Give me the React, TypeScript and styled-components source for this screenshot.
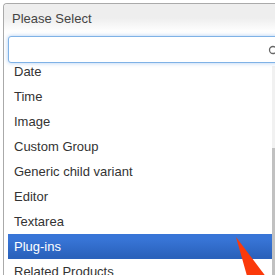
import * as React from 'react';
import styled, { createGlobalStyle } from 'styled-components';

const GlobalStyle = createGlobalStyle`
  html, body {
    margin: 0;
    padding: 0;
    background: #ffffff;
    overflow: hidden;
  }
  body {
    font-family: "Liberation Sans", Arial, sans-serif;
  }
`;

const Page = styled.div`
  position: relative;
  width: 275px;
  height: 275px;
  overflow: hidden;
  background: #ffffff;
`;

const Select = styled.div`
  margin: 3px 0 0 3px;
  width: 300px;
  border: 1px solid #aaaaaa;
  border-bottom: none;
  border-radius: 4px 4px 0 0;
  background: #ffffff;
`;

const Header = styled.div`
  height: 28px;
  line-height: 29px;
  padding-left: 8px;
  font-size: 13px;
  color: #444444;
  border-radius: 4px 4px 0 0;
  background-image: linear-gradient(to top, #ffffff 0%, #eeeeee 50%);
`;

const SearchWrap = styled.div`
  padding: 4px 0 0 4px;
`;

const SearchInput = styled.div`
  position: relative;
  height: 25px;
  width: 290px;
  border: 1px solid #7fb2e6;
  border-radius: 3px;
  box-shadow: 0 0 4px rgba(102, 160, 230, 0.55);
  background: #ffffff;
`;

const SearchIcon = styled.svg`
  position: absolute;
  left: 259px;
  top: 8px;
`;

const Results = styled.div`
  display: flex;
  height: 212px;
  padding: 3px 0 0 4px;
  overflow: hidden;
`;

const List = styled.ul`
  list-style: none;
  margin: -7px 0 0 0;
  padding: 0;
  width: 264px;
`;

const Item = styled.li<{ $active?: boolean }>`
  height: 25px;
  line-height: 25px;
  padding-left: 6px;
  font-size: 13px;
  color: ${(p) => (p.$active ? '#ffffff' : '#333333')};
  background: ${(p) =>
    p.$active ? 'linear-gradient(to bottom, #3875d7 20%, #2a62bc 90%)' : 'transparent'};
  white-space: nowrap;
`;

const Scrollbar = styled.div`
  display: flex;
  flex-direction: column;
  width: 17px;
  background: #f1f1f1;
`;

const Thumb = styled.div<{ $top: number }>`
  margin-top: ${(p) => p.$top}px;
  flex: 1;
  background: #c1c1c1;
`;

const Arrow = styled.svg`
  position: absolute;
  left: 0;
  top: 0;
  pointer-events: none;
`;

const options = [
  'Date',
  'Time',
  'Image',
  'Custom Group',
  'Generic child variant',
  'Editor',
  'Textarea',
  'Plug-ins',
  'Related Products',
];

const App: React.FC = () => (
  <Page>
    <GlobalStyle />
    <Select>
      <Header>Please Select</Header>
      <SearchWrap>
        <SearchInput>
          <SearchIcon width="14" height="14" viewBox="0 0 14 14">
            <circle cx="5" cy="5" r="3.5" fill="none" stroke="#666" strokeWidth="1.3" />
            <line x1="7.5" y1="7.5" x2="11" y2="11" stroke="#666" strokeWidth="1.6" />
          </SearchIcon>
        </SearchInput>
      </SearchWrap>
      <Results>
        <List>
          {options.map((o) => (
            <Item key={o} $active={o === 'Plug-ins'}>
              {o}
            </Item>
          ))}
        </List>
        <Scrollbar>
          <Thumb $top={82} />
        </Scrollbar>
      </Results>
    </Select>
    <Arrow width="275" height="275" viewBox="0 0 275 275">
      <polygon points="236,237 251,290 276,290" fill="#fb3a0b" />
    </Arrow>
  </Page>
);

export default App;
